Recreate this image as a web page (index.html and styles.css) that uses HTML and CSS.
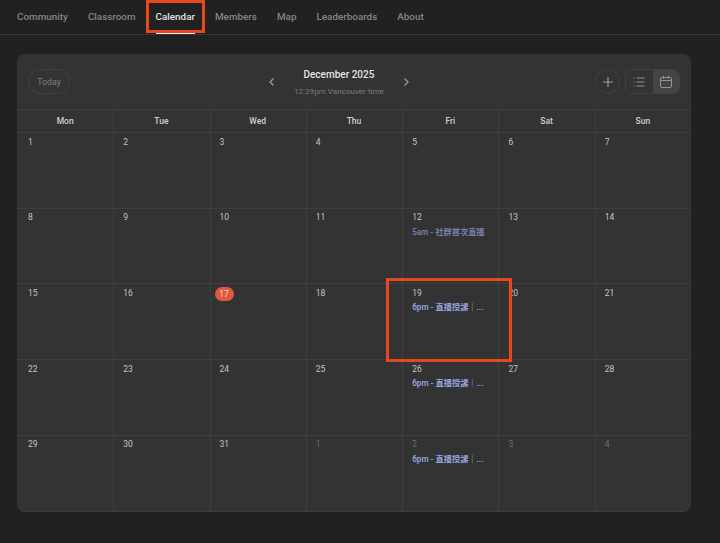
FILE: index.html
```html
<!DOCTYPE html>
<html lang="en">
<head>
<meta charset="utf-8">
<title>Calendar</title>
<link rel="stylesheet" href="styles.css">
</head>
<body>
<nav class="tabs">
  <a class="tab">Community</a>
  <a class="tab">Classroom</a>
  <a class="tab active">Calendar</a>
  <a class="tab">Members</a>
  <a class="tab">Map</a>
  <a class="tab">Leaderboards</a>
  <a class="tab">About</a>
</nav>
<main class="card">
  <header class="toolbar">
    <button class="today">Today</button>
    <div class="month-nav">
      <svg class="chev" width="12" height="12" viewBox="0 0 12 12"><path d="M7.500 2.500 4 6l3.500 3.500"/></svg>
      <div class="month">
        <div class="month-title">December 2025</div>
        <div class="month-sub">12:29pm Vancouver time</div>
      </div>
      <svg class="chev" width="12" height="12" viewBox="0 0 12 12"><path d="M4.500 2.500 8 6 4.500 9.500"/></svg>
    </div>
    <div class="tool-right">
      <button class="add"><svg width="14" height="14" viewBox="0 0 14 14"><path d="M7 2v10M2 7h10"/></svg></button>
      <div class="views">
        <span class="view"><svg width="14" height="14" viewBox="0 0 14 14"><path d="M1.500 3h1M4.500 3h8M1.500 7h1M4.500 7h8M1.500 11h1M4.500 11h8"/></svg></span>
        <span class="view on"><svg width="14" height="14" viewBox="0 0 14 14"><rect x="1.500" y="2.500" width="11" height="10" rx="1.500"/><path d="M1.500 5.500h11M4.500 1v2.500M9.500 1v2.500"/></svg></span>
      </div>
    </div>
  </header>
  <div class="grid">
    <div class="dow">Mon</div><div class="dow">Tue</div><div class="dow">Wed</div><div class="dow">Thu</div><div class="dow">Fri</div><div class="dow">Sat</div><div class="dow">Sun</div>
    <div class="day"><span class="num">1</span></div><div class="day"><span class="num">2</span></div><div class="day"><span class="num">3</span></div><div class="day"><span class="num">4</span></div><div class="day"><span class="num">5</span></div><div class="day"><span class="num">6</span></div><div class="day"><span class="num">7</span></div>
    <div class="day"><span class="num">8</span></div><div class="day"><span class="num">9</span></div><div class="day"><span class="num">10</span></div><div class="day"><span class="num">11</span></div><div class="day"><span class="num">12</span><div class="event past">5am - 社群首次直播</div></div><div class="day"><span class="num">13</span></div><div class="day"><span class="num">14</span></div>
    <div class="day"><span class="num">15</span></div><div class="day"><span class="num">16</span></div><div class="day"><span class="num today-num">17</span></div><div class="day"><span class="num">18</span></div><div class="day"><span class="num">19</span><div class="event">6pm - 直播授課｜...</div></div><div class="day"><span class="num">20</span></div><div class="day"><span class="num">21</span></div>
    <div class="day"><span class="num">22</span></div><div class="day"><span class="num">23</span></div><div class="day"><span class="num">24</span></div><div class="day"><span class="num">25</span></div><div class="day"><span class="num">26</span><div class="event">6pm - 直播授課｜...</div></div><div class="day"><span class="num">27</span></div><div class="day"><span class="num">28</span></div>
    <div class="day"><span class="num">29</span></div><div class="day"><span class="num">30</span></div><div class="day"><span class="num">31</span></div><div class="day"><span class="num dim">1</span></div><div class="day"><span class="num dim">2</span><div class="event">6pm - 直播授課｜...</div></div><div class="day"><span class="num dim">3</span></div><div class="day"><span class="num dim">4</span></div>
  </div>
</main>
<div class="mark mark-tab"></div>
<div class="mark mark-event"></div>
</body>
</html>
```
FILE: styles.css
```css
* { box-sizing: border-box; }
html, body { margin: 0; height: 100%; }
body {
  background: #212121;
  font-family: Roboto, "Noto Sans CJK TC", sans-serif;
  overflow: hidden;
  position: relative;
}
.tabs {
  display: flex;
  gap: 20px;
  height: 35px;
  padding-left: 17px;
  border-bottom: 1px solid #363636;
}
.tab {
  font-size: 9.900px;
  font-weight: 500;
  line-height: 33px;
  color: #858585;
  height: 34px;
}
.tab.active {
  color: #e2e2e2;
  border-bottom: 2px solid #ececec;
}
.card {
  margin: 19px 0 0 17px;
  width: 674px;
  height: 458px;
  background: #333333;
  border-radius: 8px;
  border-bottom: 1px solid #3c3c3c;
  overflow: hidden;
}
.toolbar {
  height: 55px;
  display: flex;
  align-items: center;
  padding: 0 11px;
}
.today {
  flex: none;
  width: 42px;
  height: 25px;
  border: 1px solid #414141;
  border-radius: 13px;
  background: none;
  color: #7d7d7d;
  font: 400 8.800px Roboto, sans-serif;
  padding: 0;
}
.month-nav {
  display: flex;
  align-items: center;
  gap: 16px;
  margin-left: 196px;
}
.chev path {
  fill: none;
  stroke: #9a9a9a;
  stroke-width: 1.300;
}
.month { text-align: center; padding-top: 2px; }
.month-title {
  font-size: 10px;
  font-weight: 500;
  color: #e2e2e2;
  line-height: 14px;
}
.month-sub {
  font-size: 8.100px;
  color: #7d7d7d;
  line-height: 12px;
  margin-top: 3px;
}
.tool-right {
  display: flex;
  align-items: center;
  gap: 5px;
  margin-left: auto;
}
.add {
  width: 25px;
  height: 25px;
  border: 1px solid #414141;
  border-radius: 50%;
  background: none;
  padding: 0;
  display: flex;
  align-items: center;
  justify-content: center;
}
.add path { stroke: #a0a0a0; stroke-width: 1.100; fill: none; }
.views {
  display: flex;
  width: 55px;
  height: 25px;
  border: 1px solid #414141;
  border-radius: 7px;
  overflow: hidden;
}
.view {
  flex: 1;
  display: flex;
  align-items: center;
  justify-content: center;
}
.view.on { background: #444444; }
.view path, .view rect { stroke: #949494; stroke-width: 1; fill: none; }
.grid {
  display: grid;
  grid-template-columns: repeat(7, 1fr);
  grid-template-rows: 23px repeat(4, 75.700px) 1fr;
  height: 402px;
  border-top: 1px solid #3e3e3e;
}
.dow {
  font-size: 8.500px;
  font-weight: 500;
  color: #cfcfcf;
  text-align: center;
  line-height: 22px;
  padding-right: 1px;
  border-left: 1px solid #3e3e3e;
  border-bottom: 1px solid #3e3e3e;
}
.day {
  padding: 2.500px 10px 0 9px;
  border-left: 1px solid #3e3e3e;
  border-bottom: 1px solid #3e3e3e;
  min-width: 0;
}
.dow:nth-child(7n+1), .day:nth-child(7n+1) { border-left: 0; }
.dow:nth-child(7n+1) { padding-right: 0; }
.day:nth-child(7n+1) { padding-left: 11px; }
.day:nth-last-child(-n+7) { border-bottom: 0; }
.num {
  display: block;
  width: fit-content;
  font-size: 8.500px;
  line-height: 12px;
  color: #c4c4c4;
}
.num.dim { color: #6f6f6f; }
.num.today-num {
  background: #e0593f;
  color: #f4d5cd;
  width: 19px;
  height: 14px;
  line-height: 14px;
  border-radius: 7px;
  text-align: center;
  margin-left: -5px;
  margin-bottom: -2px;
}
.event {
  margin-top: 2.500px;
  font-size: 8.200px;
  font-weight: 600;
  line-height: 12px;
  color: #93a4dc;
  white-space: nowrap;
  overflow: hidden;
}
.event.past { color: #7482ab; }
.mark {
  position: absolute;
  border: 3px solid #e8461f;
}
.mark-tab { left: 146px; top: 0; width: 59px; height: 33px; }
.mark-event { left: 386px; top: 278px; width: 126px; height: 84px; }
```
